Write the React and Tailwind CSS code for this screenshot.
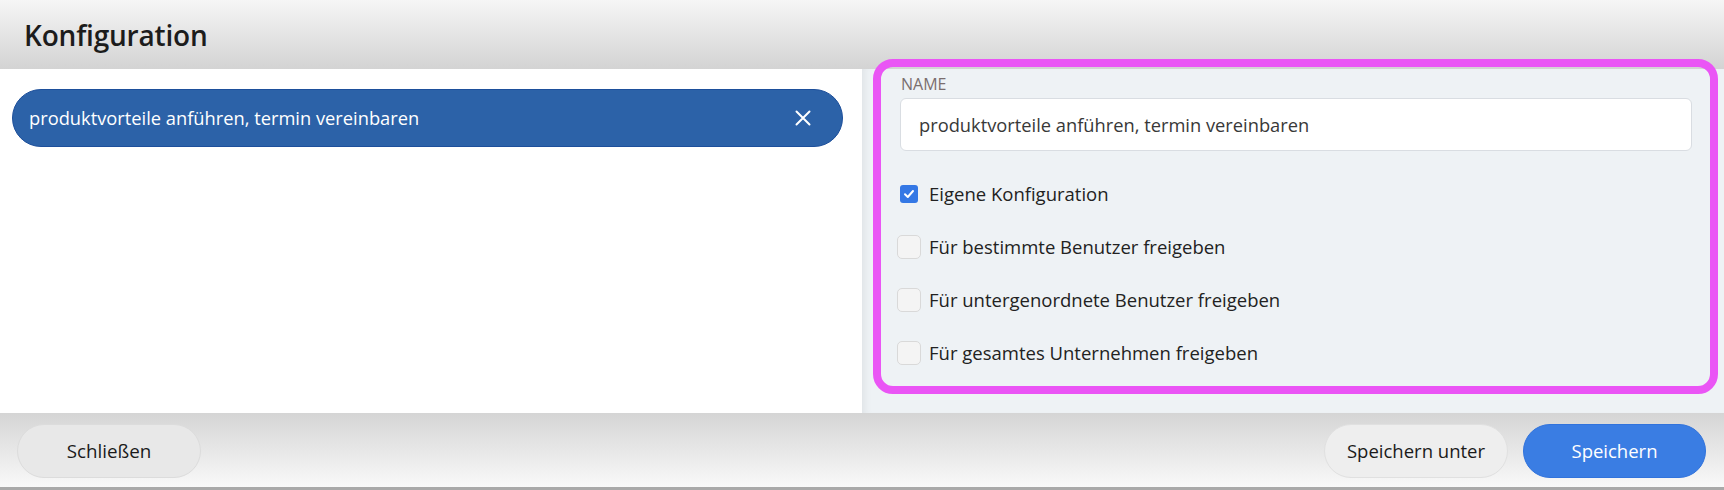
import React, { useState } from "react";

function CloseIcon() {
  return (
    <svg width="16" height="16" viewBox="0 0 16 16" fill="none">
      <path
        d="M1.5 1.5L14.5 14.5M14.5 1.5L1.5 14.5"
        stroke="white"
        strokeWidth="2"
        strokeLinecap="round"
      />
    </svg>
  );
}

function CheckRow({ label, checked, onToggle }) {
  return (
    <div
      className="h-[53px] flex items-center gap-[8px] cursor-pointer"
      onClick={onToggle}
    >
      <div className="w-[24px] h-[24px] flex items-center justify-center">
        {checked ? (
          <div className="w-[18px] h-[18px] rounded-[3px] bg-[#3478e5] flex items-center justify-center">
            <svg width="12" height="12" viewBox="0 0 12 12" fill="none">
              <path
                d="M2 6.3L4.8 9L10 3"
                stroke="white"
                strokeWidth="2"
                strokeLinecap="round"
                strokeLinejoin="round"
              />
            </svg>
          </div>
        ) : (
          <div className="w-[24px] h-[24px] rounded-[5px] bg-[#f4f4f4] border border-[#d9d9d9]" />
        )}
      </div>
      <span className="text-[18.5px] leading-[24px] text-[#222]">{label}</span>
    </div>
  );
}

function App() {
  const [checks, setChecks] = useState([true, false, false, false]);
  const labels = [
    "Eigene Konfiguration",
    "Für bestimmte Benutzer freigeben",
    "Für untergenordnete Benutzer freigeben",
    "Für gesamtes Unternehmen freigeben",
  ];

  const toggle = (i) => {
    const next = [...checks];
    next[i] = !next[i];
    setChecks(next);
  };

  return (
    <div className="relative w-[1724px] h-[490px] flex flex-col font-['Open_Sans',sans-serif] overflow-hidden">
      {/* header */}
      <div className="h-[69px] shrink-0 flex items-center pl-[24px] bg-gradient-to-b from-[#f6f6f6] to-[#d3d3d3]">
        <h1 className="text-[28px] font-semibold text-[#1c1c1c] leading-none tracking-[-0.2px]">
          Konfiguration
        </h1>
      </div>

      {/* body */}
      <div className="flex-1 flex">
        <div className="w-[862px] bg-white pt-[20px] pl-[12px]">
          <div className="w-[831px] h-[58px] rounded-full bg-[#2c62a8] border border-[#1d4f9b] flex items-center justify-between pl-[16px] pr-[31px]">
            <span className="text-[18.3px] leading-[24px] text-white">
              produktvorteile anführen, termin vereinbaren
            </span>
            <CloseIcon />
          </div>
        </div>

        <div className="flex-1 bg-[#eef2f5] pl-[38px] pr-[32px] pt-[5px] shadow-[inset_8px_0_8px_-6px_rgba(0,0,0,0.07)]">
          <label className="block text-[16px] leading-[20px] uppercase text-[#7a6e6e] pl-[1px]">
            Name
          </label>
          <div className="mt-[4px] h-[53px] bg-white border border-[#d9dde2] rounded-[6px] flex items-center pl-[18px]">
            <span className="text-[18.3px] leading-[24px] text-[#383838]">
              produktvorteile anführen, termin vereinbaren
            </span>
          </div>
          <div className="mt-[16px] -ml-[3px]">
            {labels.map((l, i) => (
              <CheckRow
                key={l}
                label={l}
                checked={checks[i]}
                onToggle={() => toggle(i)}
              />
            ))}
          </div>
        </div>
      </div>

      {/* footer */}
      <div className="h-[77px] shrink-0 flex justify-between pt-[11px] pl-[17px] pr-[18px] bg-gradient-to-b from-[#d5d5d5] to-[#f9f9f9] border-b-[3px] border-[#a9a9a9]">
        <button className="w-[184px] h-[54px] rounded-full bg-[#e8e8e8] border border-[#dcdcdc] text-[18.8px] text-[#1a1a1a]">
          Schließen
        </button>
        <div className="flex gap-[15px]">
          <button className="w-[184px] h-[54px] rounded-full bg-[#eeeeee] border border-[#e0e0e0] text-[18.5px] text-[#1a1a1a]">
            Speichern unter
          </button>
          <button className="w-[183px] h-[54px] rounded-full bg-[#3a7de3] border border-[#3173dc] text-[18.5px] text-white">
            Speichern
          </button>
        </div>
      </div>

      {/* highlight outline */}
      <div className="absolute left-[873px] top-[59px] w-[845px] h-[335px] border-[8px] border-[#ea55f5] rounded-[20px] pointer-events-none" />
    </div>
  );
}

export default App;
